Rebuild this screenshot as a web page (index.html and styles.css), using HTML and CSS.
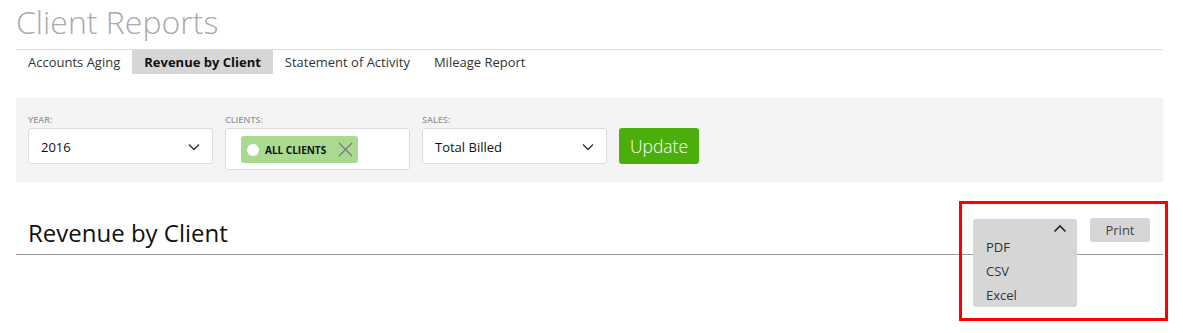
FILE: index.html
```html
<html>
<head>
    <meta charset="utf-8" />
    <title>Client Reports</title>
    <link rel="stylesheet" href="styles.css">
</head>
<body>
    <div class="page">
        <h1 class="page-title">Client Reports</h1>
        <ul class="tabs">
            <li>Accounts Aging</li>
            <li class="active">Revenue by Client</li>
            <li>Statement of Activity</li>
            <li>Mileage Report</li>
        </ul>
        <div class="filters">
            <div class="field">
                <label>Year:</label>
                <div class="select">
                    <span>2016</span>
                    <svg class="chevron" width="12" height="8" viewBox="0 0 12 8"><path d="M1 1.5 L6 6.5 L11 1.5" fill="none" stroke="#333" stroke-width="1.4"/></svg>
                </div>
            </div>
            <div class="field">
                <label>Clients:</label>
                <div class="multi">
                    <span class="tag">
                        <span class="dot"></span>
                        <span class="tag-text">All Clients</span>
                        <svg class="tag-x" width="15" height="15" viewBox="0 0 15 15"><path d="M1 1 L14 14 M14 1 L1 14" stroke="#777" stroke-width="1.1"/></svg>
                    </span>
                </div>
            </div>
            <div class="field">
                <label>Sales:</label>
                <div class="select">
                    <span>Total Billed</span>
                    <svg class="chevron" width="12" height="8" viewBox="0 0 12 8"><path d="M1 1.5 L6 6.5 L11 1.5" fill="none" stroke="#333" stroke-width="1.4"/></svg>
                </div>
            </div>
            <button class="update">Update</button>
        </div>
        <div class="report-head">
            <h2>Revenue by Client</h2>
            <div class="actions">
                <div class="export">
                    <div class="export-toggle">
                        <svg width="14" height="9" viewBox="0 0 14 9"><path d="M1.5 7.5 L7 2 L12.5 7.5" fill="none" stroke="#222" stroke-width="1.6"/></svg>
                    </div>
                    <ul class="export-menu">
                        <li>PDF</li>
                        <li>CSV</li>
                        <li>Excel</li>
                    </ul>
                </div>
                <button class="print">Print</button>
                <div class="highlight"></div>
            </div>
        </div>
    </div>
</body>
</html>
```

FILE: styles.css
```css
html, body {
    margin: 0;
    padding: 0;
    background: #fff;
}
body {
    font-family: "Open Sans", "Liberation Sans", sans-serif;
    color: #333;
}
.page {
    width: 1147px;
    margin-left: 16px;
}
.page-title {
    margin: 0;
    padding: 0;
    height: 50px;
    line-height: 43px;
    font-size: 32px;
    font-weight: 300;
    color: #aaa;
    border-bottom: 1px solid #ddd;
    box-sizing: border-box;
}
.tabs {
    list-style: none;
    margin: 0;
    padding: 0;
    display: flex;
    height: 24px;
}
.tabs li {
    padding: 0 12px;
    font-size: 13px;
    line-height: 24px;
    color: #333;
}
.tabs li.active {
    background: #d6d6d6;
    font-weight: 700;
    color: #111;
}
.filters {
    margin-top: 24px;
    background: #f4f4f4;
    height: 84px;
    box-sizing: border-box;
    padding: 16px 12px 0 12px;
    display: flex;
    align-items: flex-start;
    gap: 12px;
}
.field {
    width: 185px;
    display: flex;
    flex-direction: column;
}
.field label {
    font-size: 9px;
    font-weight: 600;
    text-transform: uppercase;
    color: #999;
    line-height: 12px;
    height: 14px;
}
.select {
    height: 36px;
    box-sizing: border-box;
    background: #fff;
    border: 1px solid #ddd;
    border-radius: 3px;
    display: flex;
    align-items: center;
    justify-content: space-between;
    padding: 2px 12px 0 12px;
    font-size: 13px;
    color: #111;
}
.multi {
    height: 42px;
    box-sizing: border-box;
    background: #fff;
    border: 1px solid #ddd;
    border-radius: 3px;
    padding: 7px 15px;
}
.tag {
    display: inline-flex;
    align-items: center;
    height: 27px;
    width: 117px;
    box-sizing: border-box;
    padding: 0 5px 0 6px;
    background: #a9da8f;
    border-radius: 3px;
}
.dot {
    width: 12px;
    height: 12px;
    border-radius: 50%;
    background: #fff;
    margin-right: 6px;
}
.tag-text {
    font-size: 10px;
    font-weight: 700;
    text-transform: uppercase;
    color: #111;
}
.tag-x {
    margin-left: auto;
}
.update {
    margin-top: 14px;
    width: 80px;
    height: 36px;
    border: none;
    border-radius: 3px;
    background: #4cae0c;
    color: #fff;
    font-family: inherit;
    font-size: 17.5px;
    font-weight: 300;
    padding: 0;
}
.report-head {
    margin-top: 28px;
    height: 45px;
    box-sizing: border-box;
    border-bottom: 1px solid #999;
    display: flex;
    justify-content: space-between;
    align-items: flex-start;
    padding: 8px 13px 0 12px;
}
.report-head h2 {
    margin: 0;
    font-size: 24px;
    font-weight: 400;
    color: #111;
    line-height: 30px;
}
.actions {
    position: relative;
    display: flex;
    gap: 13px;
}
.export {
    position: relative;
    width: 104px;
}
.export-toggle {
    height: 16px;
    margin-top: 1px;
    box-sizing: border-box;
    padding: 5px 10px 0 0;
    background: #d6d6d6;
    border-radius: 3px 3px 0 0;
    display: flex;
    justify-content: flex-end;
    align-items: flex-start;
}
.export-menu {
    position: absolute;
    top: 17px;
    left: 0;
    right: 0;
    margin: 0;
    padding: 0;
    list-style: none;
    background: #d6d6d6;
    border-radius: 0 0 3px 3px;
}
.export-menu li {
    padding-left: 13px;
    font-size: 13px;
    line-height: 24px;
    color: #333;
}
.print {
    width: 60px;
    height: 24px;
    border: none;
    border-radius: 3px;
    background: #d6d6d6;
    color: #444;
    font-family: inherit;
    font-size: 13px;
    padding: 0;
}
.highlight {
    position: absolute;
    left: -14px;
    top: -17px;
    width: 209px;
    height: 120px;
    box-sizing: border-box;
    border: 3px solid #f00;
}
```
